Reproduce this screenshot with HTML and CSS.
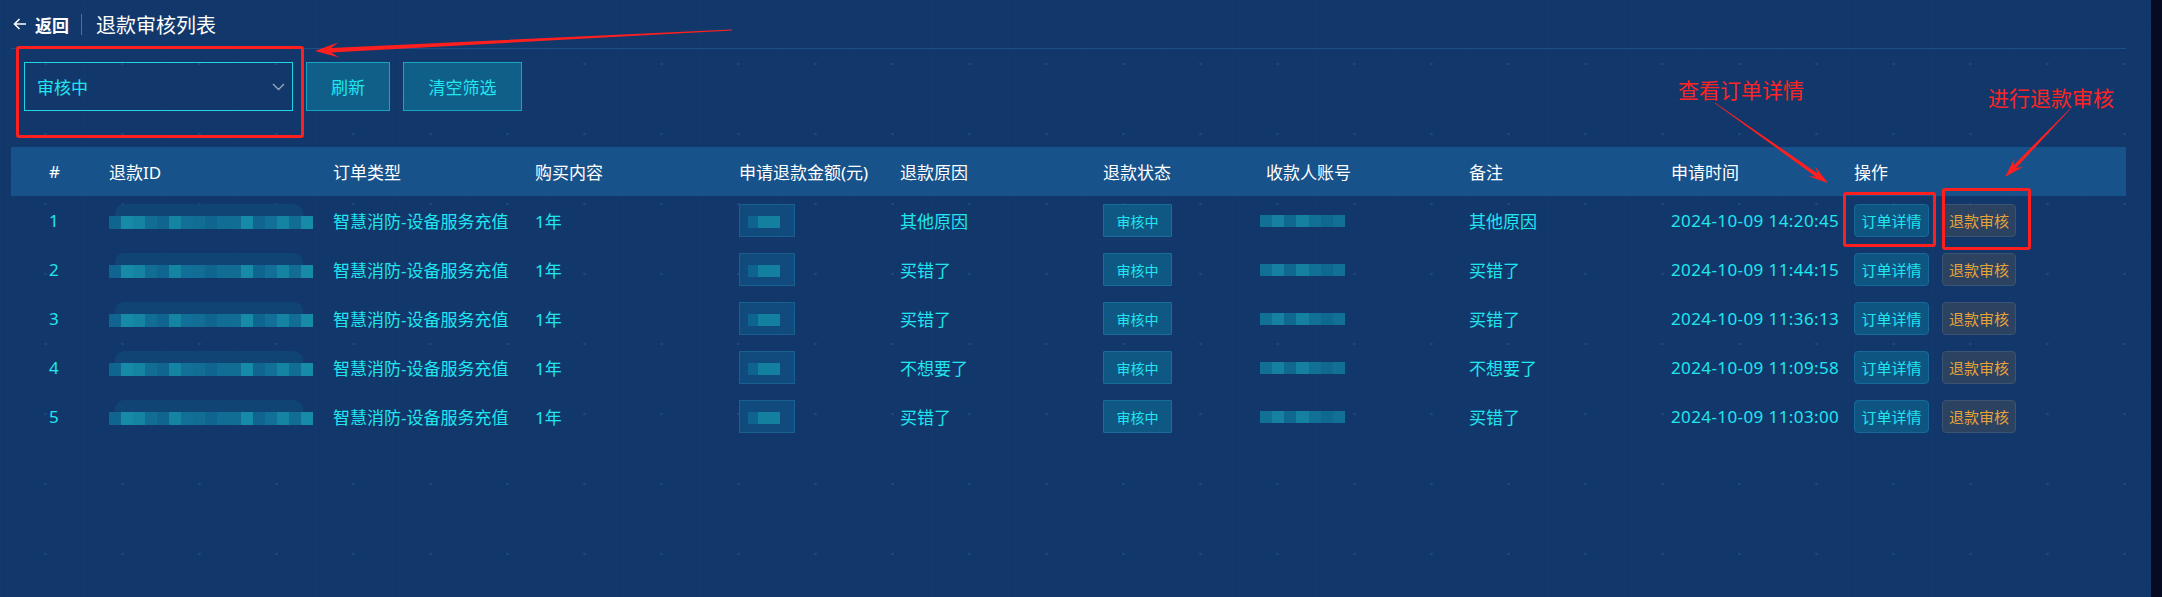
FILE: index.html
```html
<!DOCTYPE html>
<html lang="zh-CN">
<head>
<meta charset="utf-8">
<title>退款审核列表</title>
<link rel="stylesheet" href="styles.css">
</head>
<body>
<div class="app">
  <main class="page">
    <header class="topbar">
      <a class="back">
        <svg class="back-icon" width="14" height="12" viewBox="0 0 14 12"><path d="M13 6H1.5M6.5 1L1.5 6l5 5" fill="none" stroke="#fff" stroke-width="1.6"/></svg>
        <span>返回</span>
      </a>
      <span class="sep"></span>
      <h1 class="title">退款审核列表</h1>
    </header>

    <div class="filters">
      <div class="select">
        <span>审核中</span>
        <svg width="13" height="8" viewBox="0 0 13 8"><path d="M1 1l5.5 5.5L12 1" fill="none" stroke="#9aa8bb" stroke-width="1.3"/></svg>
      </div>
      <button class="btn btn-refresh">刷新</button>
      <button class="btn btn-clear">清空筛选</button>
    </div>

    <div class="table">
      <div class="thead">
        <div class="c-idx">#</div>
        <div>退款ID</div>
        <div>订单类型</div>
        <div>购买内容</div>
        <div>申请退款金额(元)</div>
        <div>退款原因</div>
        <div>退款状态</div>
        <div>收款人账号</div>
        <div>备注</div>
        <div>申请时间</div>
        <div>操作</div>
      </div>

      <div class="row">
        <div class="c-idx">1</div>
        <div><div class="mz-id"><div class="mz-top"></div><div class="mz-band"><i></i><i></i><i></i><i></i><i></i><i></i><i></i><i></i><i></i><i></i><i></i><i></i><i></i><i></i><i></i><i></i><i></i></div></div></div>
        <div>智慧消防-设备服务充值</div>
        <div>1年</div>
        <div><div class="mz-amt"><span></span></div></div>
        <div>其他原因</div>
        <div><span class="badge">审核中</span></div>
        <div><div class="mz-acc"><i></i><i></i><i></i><i></i><i></i><i></i><i></i></div></div>
        <div>其他原因</div>
        <div class="date">2024-10-09 14:20:45</div>
        <div class="ops"><button class="op op-detail">订单详情</button><button class="op op-audit">退款审核</button></div>
      </div>

      <div class="row">
        <div class="c-idx">2</div>
        <div><div class="mz-id"><div class="mz-top"></div><div class="mz-band"><i></i><i></i><i></i><i></i><i></i><i></i><i></i><i></i><i></i><i></i><i></i><i></i><i></i><i></i><i></i><i></i><i></i></div></div></div>
        <div>智慧消防-设备服务充值</div>
        <div>1年</div>
        <div><div class="mz-amt"><span></span></div></div>
        <div>买错了</div>
        <div><span class="badge">审核中</span></div>
        <div><div class="mz-acc"><i></i><i></i><i></i><i></i><i></i><i></i><i></i></div></div>
        <div>买错了</div>
        <div class="date">2024-10-09 11:44:15</div>
        <div class="ops"><button class="op op-detail">订单详情</button><button class="op op-audit">退款审核</button></div>
      </div>

      <div class="row">
        <div class="c-idx">3</div>
        <div><div class="mz-id"><div class="mz-top"></div><div class="mz-band"><i></i><i></i><i></i><i></i><i></i><i></i><i></i><i></i><i></i><i></i><i></i><i></i><i></i><i></i><i></i><i></i><i></i></div></div></div>
        <div>智慧消防-设备服务充值</div>
        <div>1年</div>
        <div><div class="mz-amt"><span></span></div></div>
        <div>买错了</div>
        <div><span class="badge">审核中</span></div>
        <div><div class="mz-acc"><i></i><i></i><i></i><i></i><i></i><i></i><i></i></div></div>
        <div>买错了</div>
        <div class="date">2024-10-09 11:36:13</div>
        <div class="ops"><button class="op op-detail">订单详情</button><button class="op op-audit">退款审核</button></div>
      </div>

      <div class="row">
        <div class="c-idx">4</div>
        <div><div class="mz-id"><div class="mz-top"></div><div class="mz-band"><i></i><i></i><i></i><i></i><i></i><i></i><i></i><i></i><i></i><i></i><i></i><i></i><i></i><i></i><i></i><i></i><i></i></div></div></div>
        <div>智慧消防-设备服务充值</div>
        <div>1年</div>
        <div><div class="mz-amt"><span></span></div></div>
        <div>不想要了</div>
        <div><span class="badge">审核中</span></div>
        <div><div class="mz-acc"><i></i><i></i><i></i><i></i><i></i><i></i><i></i></div></div>
        <div>不想要了</div>
        <div class="date">2024-10-09 11:09:58</div>
        <div class="ops"><button class="op op-detail">订单详情</button><button class="op op-audit">退款审核</button></div>
      </div>

      <div class="row">
        <div class="c-idx">5</div>
        <div><div class="mz-id"><div class="mz-top"></div><div class="mz-band"><i></i><i></i><i></i><i></i><i></i><i></i><i></i><i></i><i></i><i></i><i></i><i></i><i></i><i></i><i></i><i></i><i></i></div></div></div>
        <div>智慧消防-设备服务充值</div>
        <div>1年</div>
        <div><div class="mz-amt"><span></span></div></div>
        <div>买错了</div>
        <div><span class="badge">审核中</span></div>
        <div><div class="mz-acc"><i></i><i></i><i></i><i></i><i></i><i></i><i></i></div></div>
        <div>买错了</div>
        <div class="date">2024-10-09 11:03:00</div>
        <div class="ops"><button class="op op-detail">订单详情</button><button class="op op-audit">退款审核</button></div>
      </div>
    </div>
  </main>
  <div class="edge"></div>

  <!-- annotation overlay -->
  <div class="mark mark-filter"></div>
  <div class="mark mark-detail"></div>
  <div class="mark mark-audit"></div>
  <div class="note note-detail">查看订单详情</div>
  <div class="note note-audit">进行退款审核</div>
  <svg class="arrows" width="2162" height="597" viewBox="0 0 2162 597">
    <polygon points="732,30.5 331.1,52.4 339.3,57.5 315,51 338.6,42.3 330.9,48.0 732,29.5" fill="#ff1f1f"/>
    <polygon points="1715.2,102.8 1817.6,173.4 1815.1,166.5 1828,183 1808.2,176.3 1815.5,176.4 1714.8,103.2" fill="#ff1f1f"/>
    <polygon points="2070.2,109.2 2016,168.1 2023.2,166.7 2005,177 2014.5,158.4 2013.4,165.6 2069.8,108.8" fill="#ff1f1f"/>
  </svg>
</div>
</body>
</html>
```
FILE: styles.css
```css
* { box-sizing: border-box; }
html, body { margin: 0; padding: 0; height: 100%; }
body {
  background: #060b22;
  font-family: "Noto Sans", "Noto Sans CJK SC", sans-serif;
  overflow: hidden;
}
.app { position: relative; display: flex; width: 2162px; height: 597px; }
.page {
  flex: 1;
  padding: 0 25px 0 11px;
  background-color: #12386b;
  background-image:
    radial-gradient(circle, rgba(110, 160, 220, 0.14) 1px, transparent 1.6px),
    linear-gradient(rgba(255, 255, 255, 0.008) 1px, transparent 1px),
    linear-gradient(90deg, rgba(255, 255, 255, 0.008) 1px, transparent 1px);
  background-size: 77px 70px, 77px 70px, 77px 70px;
  background-position: 7px 29px, 0 29px, 7px 0;
}
.edge { width: 11px; background: #060b22; }

/* top bar */
.topbar {
  height: 49px;
  display: flex;
  align-items: center;
  padding-left: 2px;
  border-bottom: 1px solid #1d4f86;
  color: #fff;
}
.back { display: flex; align-items: center; gap: 8px; font-size: 17px; font-weight: 700; color: #fff; }
.back-icon { display: block; }
.sep { width: 1px; height: 21px; background: rgba(255, 255, 255, 0.28); margin: 0 14px 0 12px; }
.title { margin: 0; font-size: 20px; font-weight: 400; color: #fff; }

/* filters */
.filters { display: flex; gap: 13px; height: 49px; margin: 13px 0 0 13px; }
.select {
  width: 269px;
  border: 1px solid #1fd5e5;
  display: flex;
  align-items: center;
  justify-content: space-between;
  padding: 0 7px 0 12px;
  color: #20e6f0;
  font-size: 17px;
}
.btn {
  height: 49px;
  padding: 0;
  background: #0f5f88;
  border: 1px solid #16a6c4;
  color: #20e6f0;
  font-family: inherit;
  font-size: 17px;
}
.btn-refresh { width: 84px; }
.btn-clear { width: 119px; }

/* table */
.table { margin-top: 36px; }
.thead, .row {
  display: grid;
  grid-template-columns: 98px 224px 202px 204px 161px 203px 163px 203px 202px 183px 1fr;
  align-items: center;
  height: 49px;
  font-size: 17px;
  white-space: nowrap;
}
.thead { background: #17528b; color: #fff; }
.row { color: #20e6f0; }
.c-idx { padding-left: 38px; }
.date { letter-spacing: 0.4px; }

/* mosaics */
.mz-id { width: 204px; height: 25px; display: flex; flex-direction: column; margin-top: -9px; }
.mz-top { height: 12px; margin: 0 10px 0 6px; background: #104475; border-radius: 9px 9px 0 0; }
.mz-band { display: flex; height: 13px; }
.mz-band i { flex: 1; background: #126d95; }
.mz-band i:nth-child(3n) { background: #1584a3; }
.mz-band i:nth-child(4n+1) { background: #0f6590; }
.mz-band i:nth-child(5n+2) { background: #178aa8; }
.mz-band i:nth-child(7n) { background: #116f98; }

.mz-amt {
  position: relative;
  width: 56px;
  height: 33px;
  border: 1px solid #195f90;
  background: #114a7c;
}
.mz-amt span {
  position: absolute;
  left: 8px; top: 11px;
  width: 32px; height: 12px;
  background: linear-gradient(90deg, #0f6390 0 30%, #14809f 30% 100%);
}

.mz-acc { display: flex; width: 85px; height: 12px; margin-left: -6px; }
.mz-acc i { flex: 1; background: #127096; }
.mz-acc i:nth-child(2n) { background: #15809f; }
.mz-acc i:nth-child(3n) { background: #0f6890; }

/* badge & ops */
.badge {
  display: inline-flex;
  align-items: center;
  justify-content: center;
  width: 69px;
  height: 33px;
  background: #0f5884;
  border: 1px solid #1a6d9b;
  border-radius: 1px;
  color: #20e6f0;
  font-size: 14px;
}
.ops { display: flex; gap: 13px; }
.op {
  width: 75px;
  height: 33px;
  padding: 0;
  border-radius: 4px;
  font-family: inherit;
  font-size: 15px;
}
.op-detail { background: #0f5581; border: 1px solid #17699a; color: #20e6f0; }
.op-audit { width: 74px; background: #2b4261; border: 1px solid #3c5373; color: #e8a23a; }

/* annotations (overlay) */
.mark { position: absolute; border: 3px solid #ff1f1f; border-radius: 3px; }
.mark-filter { left: 16px; top: 46px; width: 288px; height: 92px; }
.mark-detail { left: 1843px; top: 192px; width: 93px; height: 55px; }
.mark-audit { left: 1942px; top: 188px; width: 89px; height: 62px; }
.note {
  position: absolute;
  color: #ff2424;
  font-family: "Noto Sans CJK SC", sans-serif;
  font-size: 21px;
  line-height: 1;
  white-space: nowrap;
}
.note-detail { left: 1678px; top: 79px; }
.note-audit { left: 1988px; top: 87px; }
.arrows { position: absolute; left: 0; top: 0; pointer-events: none; }
```
